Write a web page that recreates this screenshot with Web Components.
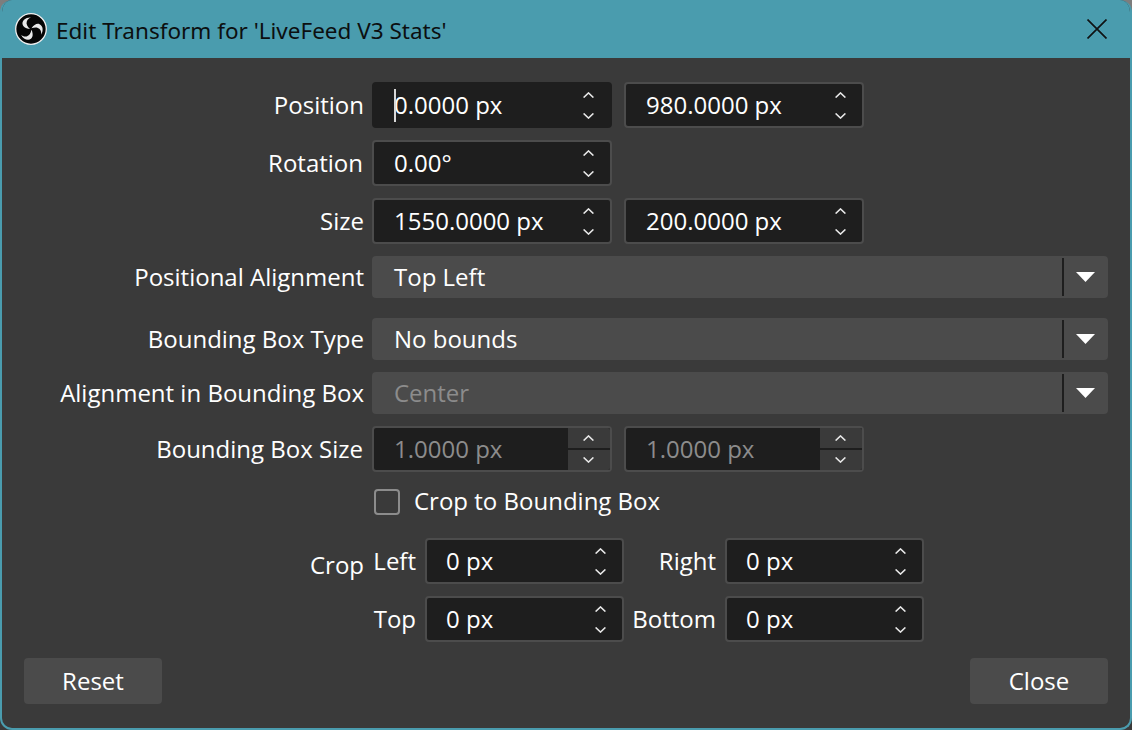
<!DOCTYPE html>
<html>
<head>
<meta charset="utf-8">
<title>Edit Transform</title>
<style>
  html, body { margin: 0; height: 100%; }
  body {
    background: linear-gradient(#7d7d7d 0 40px, #3a3a3a 40px);
    font-family: "Open Sans", sans-serif;
    font-size: 24px;
    color: #fff;
    overflow: hidden;
  }
</style>
</head>
<body>
<obs-window>
  <obs-titlebar slot="title">Edit Transform for 'LiveFeed V3 Stats'</obs-titlebar>

  <obs-row label="Position" h="46" after="12">
    <obs-spin caret>0.0000 px</obs-spin>
    <obs-spin>980.0000 px</obs-spin>
  </obs-row>
  <obs-row label="Rotation" inset="1" h="46" after="12"><obs-spin>0.00°</obs-spin></obs-row>
  <obs-row label="Size" h="46" after="12">
    <obs-spin>1550.0000 px</obs-spin>
    <obs-spin>200.0000 px</obs-spin>
  </obs-row>
  <obs-row label="Positional Alignment" h="42" after="20"><obs-combo>Top Left</obs-combo></obs-row>
  <obs-row label="Bounding Box Type" h="42" after="12"><obs-combo>No bounds</obs-combo></obs-row>
  <obs-row label="Alignment in Bounding Box" h="42" after="12"><obs-combo disabled>Center</obs-combo></obs-row>
  <obs-row label="Bounding Box Size" inset="1" h="46" after="12">
    <obs-spin disabled>1.0000 px</obs-spin>
    <obs-spin disabled>1.0000 px</obs-spin>
  </obs-row>
  <obs-row h="34" after="20"><obs-check>Crop to Bounding Box</obs-check></obs-row>
  <obs-crop></obs-crop>

  <obs-button slot="footer">Reset</obs-button>
  <obs-button slot="footer">Close</obs-button>
</obs-window>

<script>
const ARROW_UP = '<path d="M0.6 5.6 L5.5 0.9 L10.4 5.6" fill="none" stroke="currentColor" stroke-width="1.5"/>';
const ARROW_DOWN = '<path d="M0.6 0.4 L5.5 5.1 L10.4 0.4" fill="none" stroke="currentColor" stroke-width="1.5"/>';
const BLADE = 'M16 4.5 C11 4 7 7.5 7.5 11 C8 14 11 15.5 15 16 C12.4 13.5 10.9 11 11.8 8.5 C12.5 6.5 14 5 16 4.5 Z';

class ObsWindow extends HTMLElement {
  connectedCallback() {
    this.attachShadow({ mode: 'open' });
    this.shadowRoot.innerHTML = `
      <style>
        :host {
          display: flex;
          flex-direction: column;
          box-sizing: border-box;
          width: 1132px;
          height: 730px;
          background: #3a3a3a;
          border: 2px solid #4a9cae;
          border-top: 0;
          border-radius: 12px;
          overflow: hidden;
        }
        .form {
          flex: 1;
          padding: 24px 22px 0 22px;
        }
        footer {
          display: flex;
          justify-content: space-between;
          padding: 0 22px 24px 22px;
        }
      </style>
      <slot name="title"></slot>
      <div class="form"><slot></slot></div>
      <footer><slot name="footer"></slot></footer>
    `;
  }
}

class ObsTitlebar extends HTMLElement {
  connectedCallback() {
    this.attachShadow({ mode: 'open' });
    this.shadowRoot.innerHTML = `
      <style>
        :host {
          display: flex;
          align-items: center;
          height: 58px;
          margin: 0 -2px;
          padding: 0 25px 0 15px;
          background: #4a9cae;
          color: #0c0f10;
          font-family: "Noto Sans", "Open Sans", sans-serif;
          font-size: 22.5px;
          flex: none;
        }
        .logo { width: 32px; height: 32px; margin-right: 9px; flex: none; }
        .text { flex: 1; padding-top: 2px; }
        .x { width: 20px; height: 20px; flex: none; }
      </style>
      <svg class="logo" viewBox="0 0 32 32">
        <circle cx="16" cy="16" r="15.3" fill="#050505" stroke="#f0f0f0" stroke-width="1.3"/>
        <g fill="#e8e8e8">
          <path d="${BLADE}"/>
          <path d="${BLADE}" transform="rotate(120 16 16)"/>
          <path d="${BLADE}" transform="rotate(240 16 16)"/>
        </g>
      </svg>
      <span class="text"><slot></slot></span>
      <svg class="x" viewBox="0 0 20 20"><path d="M0.5 0.5 L19.5 19.5 M19.5 0.5 L0.5 19.5" stroke="#101314" stroke-width="1.7" fill="none"/></svg>
    `;
  }
}

class ObsRow extends HTMLElement {
  connectedCallback() {
    this.attachShadow({ mode: 'open' });
    const h = this.getAttribute('h');
    const after = this.getAttribute('after') || 0;
    const inset = this.getAttribute('inset') || 0;
    this.shadowRoot.innerHTML = `
      <style>
        :host {
          display: grid;
          grid-template-columns: 340px 1fr;
          column-gap: 8px;
          height: ${h}px;
          margin-bottom: ${after}px;
          align-items: center;
        }
        .label { text-align: right; white-space: nowrap; padding: 0 ${inset}px 2px 0; }
        .fields { display: flex; gap: 12px; height: 100%; align-items: center; }
      </style>
      <div class="label">${this.getAttribute('label') || ''}</div>
      <div class="fields"><slot></slot></div>
    `;
  }
}

class ObsSpin extends HTMLElement {
  connectedCallback() {
    this.attachShadow({ mode: 'open' });
    this.shadowRoot.innerHTML = `
      <style>
        :host {
          display: flex;
          box-sizing: border-box;
          width: var(--spin-w, 240px);
          height: 46px;
          flex: none;
          background: #1e1e1e;
          border: 2px solid #4c4c4c;
          border-radius: 4px;
          color: #fff;
          overflow: hidden;
        }
        :host([caret]) { border-color: #1e1e1e; }
        :host([disabled]) { color: #8c8c8c; }
        .val {
          flex: 1;
          display: flex;
          align-items: center;
          padding: 0 0 2px var(--spin-pad, 20px);
          white-space: nowrap;
          position: relative;
        }
        .caret {
          position: absolute;
          left: 20px;
          top: 5px;
          width: 2px;
          height: 33px;
          background: #d8d8d8;
        }
        .btns {
          width: 42px;
          display: flex;
          flex-direction: column;
          color: #e6e6e6;
        }
        :host([disabled]) .btns { background: #1e1e1e; gap: 2px; }
        .btns span {
          flex: 1;
          display: flex;
          align-items: center;
          justify-content: center;
        }
        :host([disabled]) .btns span { background: #3a3a3a; }
        svg { width: 11px; height: 6px; margin-right: 2px; }
      </style>
      <div class="val">${this.hasAttribute('caret') ? '<i class="caret"></i>' : ''}<slot></slot></div>
      <div class="btns">
        <span><svg viewBox="0 0 11 6">${ARROW_UP}</svg></span>
        <span><svg viewBox="0 0 11 6">${ARROW_DOWN}</svg></span>
      </div>
    `;
  }
}

class ObsCombo extends HTMLElement {
  connectedCallback() {
    this.attachShadow({ mode: 'open' });
    this.shadowRoot.innerHTML = `
      <style>
        :host {
          display: flex;
          align-items: center;
          box-sizing: border-box;
          flex: 1;
          height: 42px;
          background: #4b4b4b;
          border-radius: 4px;
          padding-left: 22px;
        }
        :host([disabled]) { color: #8c8c8c; }
        .val { flex: 1; white-space: nowrap; padding-bottom: 2px; }
        .sep { width: 2px; height: 38px; background: #1e1e1e; }
        .arrow { width: 42px; margin-right: 2px; display: flex; justify-content: center; }
        svg { width: 19px; height: 10px; display: block; }
      </style>
      <div class="val"><slot></slot></div>
      <div class="sep"></div>
      <div class="arrow"><svg viewBox="0 0 19 10"><path d="M0 0 L19 0 L9.5 10 Z" fill="#fff"/></svg></div>
    `;
  }
}

class ObsCheck extends HTMLElement {
  connectedCallback() {
    this.attachShadow({ mode: 'open' });
    this.shadowRoot.innerHTML = `
      <style>
        :host { display: flex; align-items: center; gap: 14px; margin-left: 2px; white-space: nowrap; }
        .box {
          box-sizing: border-box;
          width: 26px;
          height: 26px;
          border: 2px solid #8c8c8c;
          border-radius: 4px;
          background: #3a3a3a;
          flex: none;
        }
        span { padding-bottom: 2px; }
      </style>
      <div class="box"></div>
      <span><slot></slot></span>
    `;
  }
}

class ObsCrop extends HTMLElement {
  connectedCallback() {
    this.attachShadow({ mode: 'open' });
    this.shadowRoot.innerHTML = `
      <style>
        :host {
          display: grid;
          grid-template-columns: 340px 45px 199px 85px 199px;
          grid-template-rows: 46px 46px;
          row-gap: 12px;
          column-gap: 8px;
          align-items: center;
          --spin-w: 199px;
          --spin-pad: 19px;
        }
        .name { grid-row: 1; text-align: right; padding-top: 6px; }
        .l { text-align: right; white-space: nowrap; padding: 0 1px 2px 0; }
      </style>
      <div class="name">Crop</div>
      <div class="l" style="grid-column:2;grid-row:1">Left</div>
      <obs-spin style="grid-column:3;grid-row:1">0 px</obs-spin>
      <div class="l" style="grid-column:4;grid-row:1">Right</div>
      <obs-spin style="grid-column:5;grid-row:1">0 px</obs-spin>
      <div class="l" style="grid-column:2;grid-row:2">Top</div>
      <obs-spin style="grid-column:3;grid-row:2">0 px</obs-spin>
      <div class="l" style="grid-column:4;grid-row:2">Bottom</div>
      <obs-spin style="grid-column:5;grid-row:2">0 px</obs-spin>
    `;
  }
}

class ObsButton extends HTMLElement {
  connectedCallback() {
    this.attachShadow({ mode: 'open' });
    this.shadowRoot.innerHTML = `
      <style>
        :host {
          display: flex;
          align-items: center;
          justify-content: center;
          width: 138px;
          height: 46px;
          padding-bottom: 2px;
          box-sizing: border-box;
          background: #4b4b4b;
          border-radius: 4px;
        }
      </style>
      <slot></slot>
    `;
  }
}

customElements.define('obs-window', ObsWindow);
customElements.define('obs-titlebar', ObsTitlebar);
customElements.define('obs-row', ObsRow);
customElements.define('obs-spin', ObsSpin);
customElements.define('obs-combo', ObsCombo);
customElements.define('obs-check', ObsCheck);
customElements.define('obs-crop', ObsCrop);
customElements.define('obs-button', ObsButton);
</script>
</body>
</html>
